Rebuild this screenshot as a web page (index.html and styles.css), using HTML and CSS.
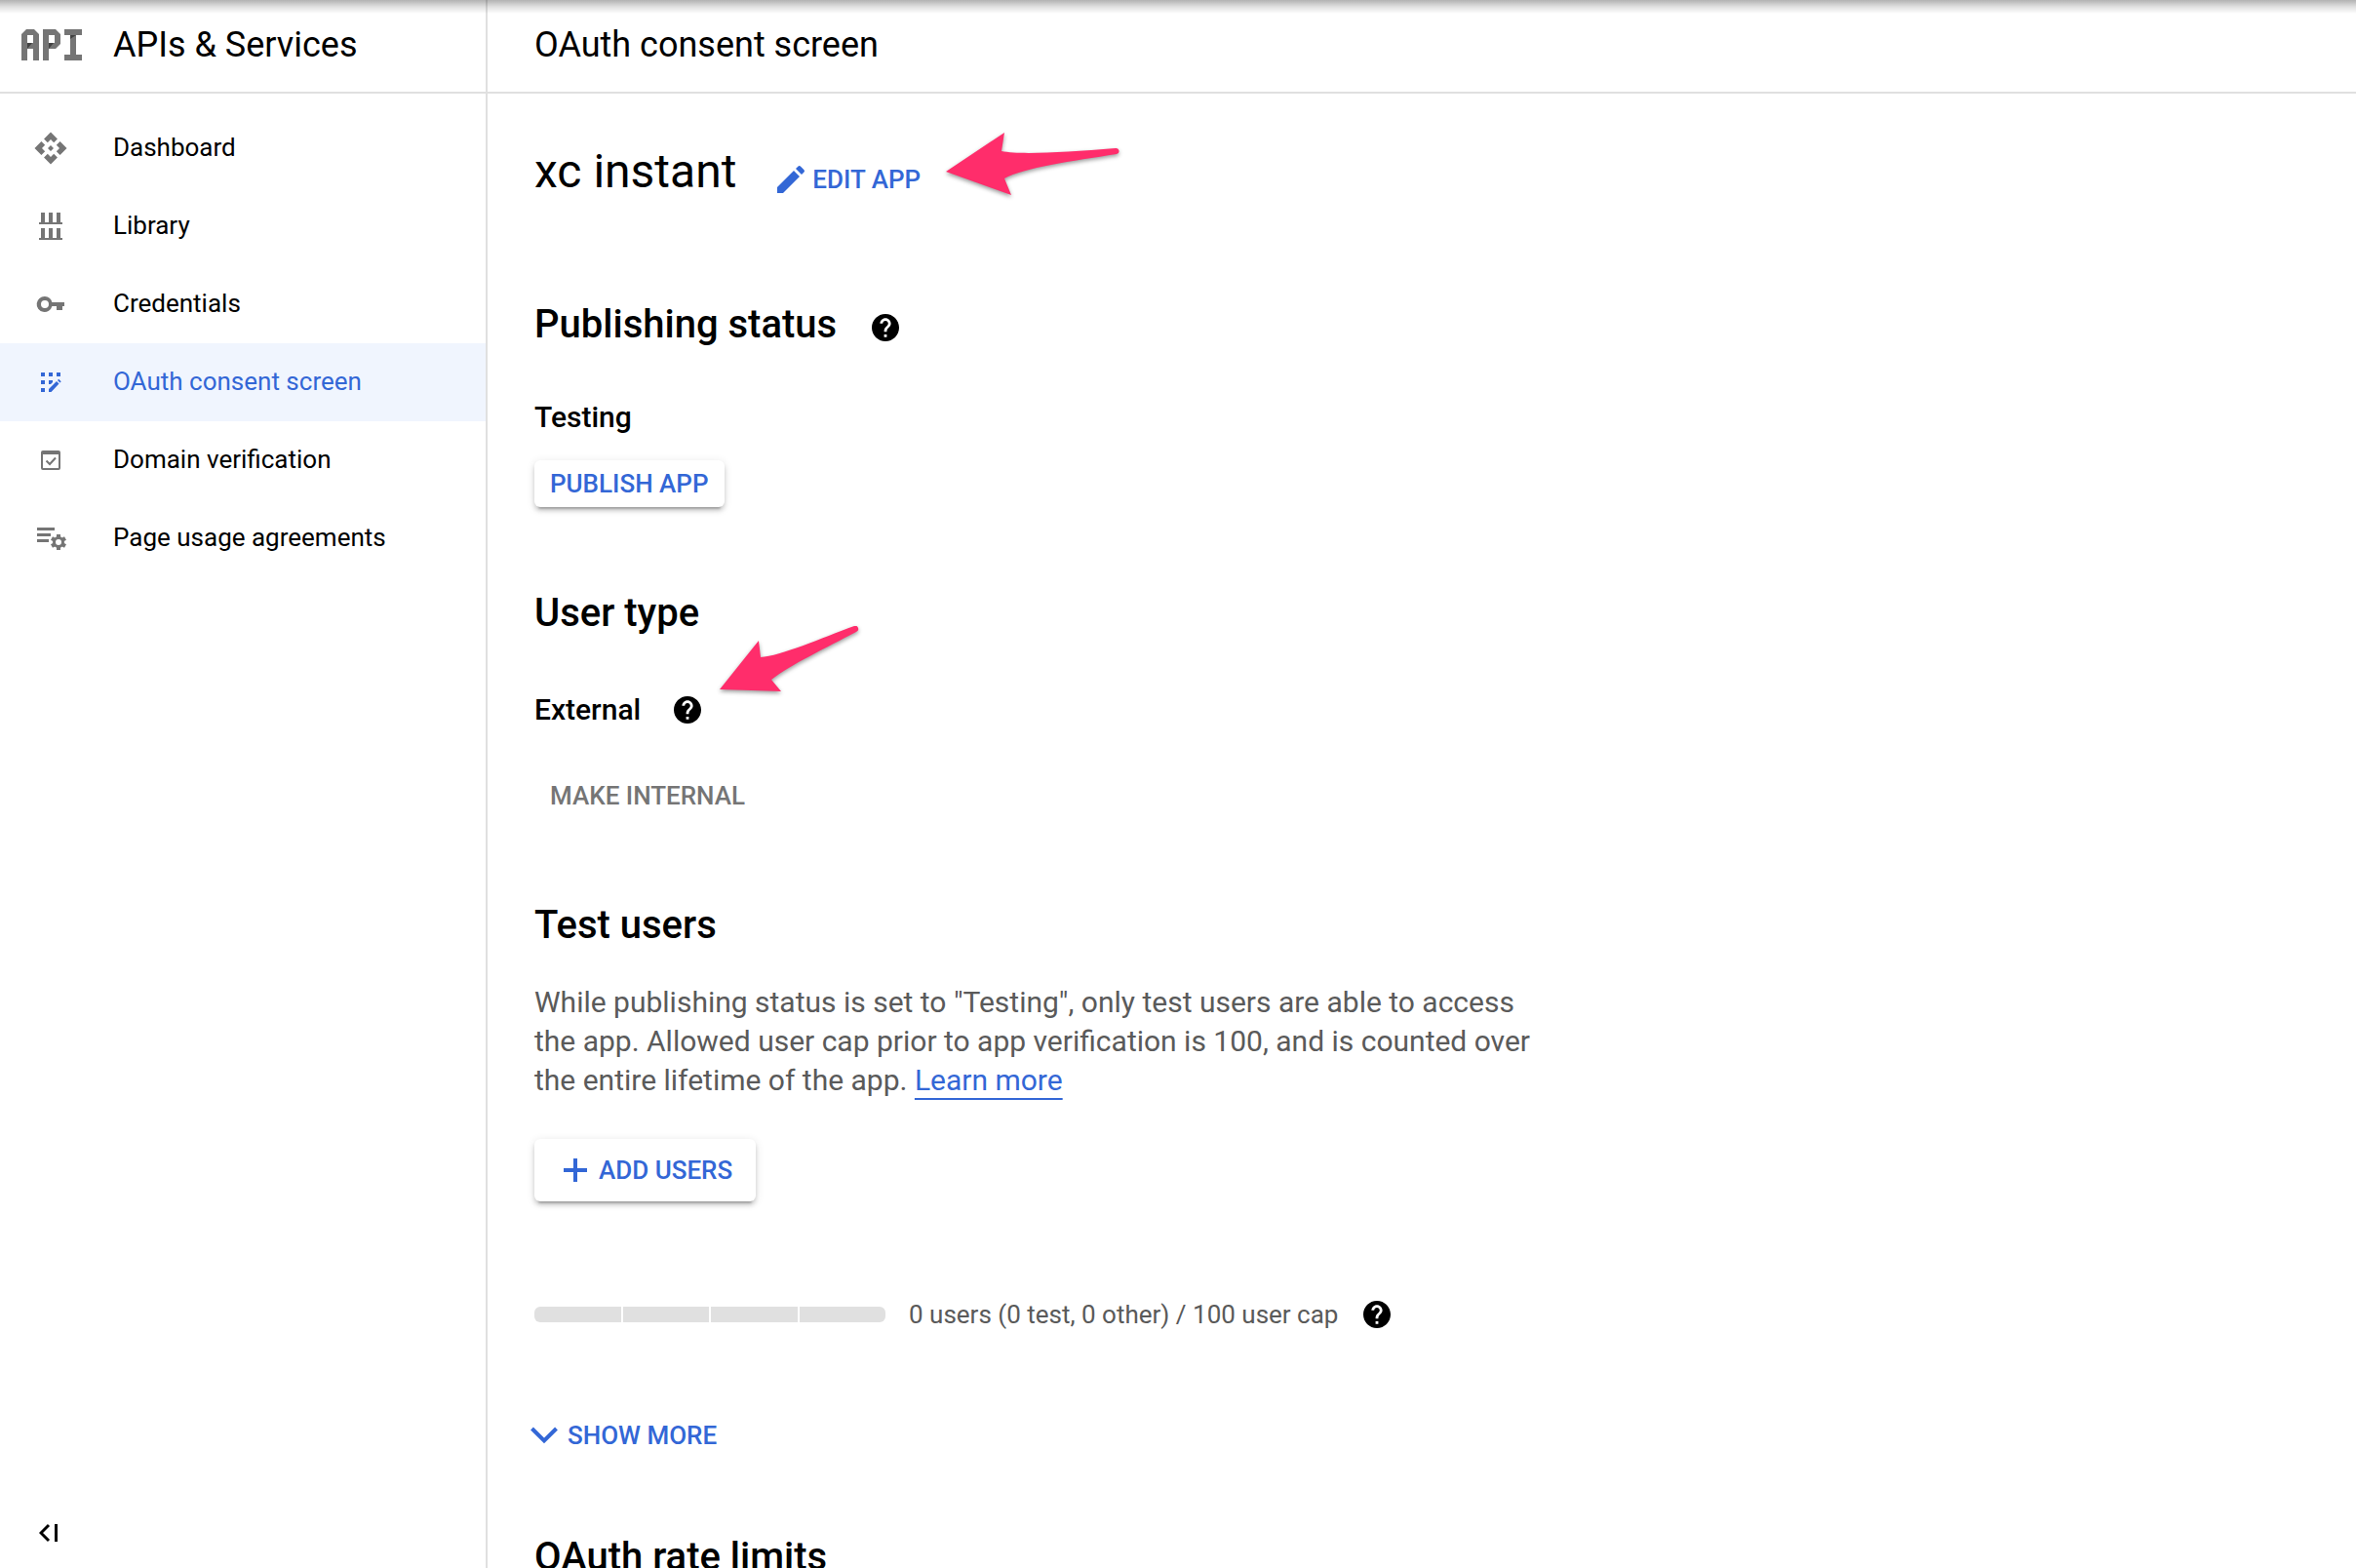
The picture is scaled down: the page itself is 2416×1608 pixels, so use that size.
FILE: index.html
```html
<!DOCTYPE html>
<html lang="en">
<head>
<meta charset="utf-8">
<meta name="viewport" content="width=device-width, initial-scale=1">
<title>OAuth consent screen – APIs &amp; Services</title>
<link rel="stylesheet" href="styles.css">
</head>
<body>
<svg class="sprite" aria-hidden="true">
  <symbol id="help" viewBox="2 2 20 20">
    <path d="M12 2C6.480 2 2 6.480 2 12s4.480 10 10 10 10-4.480 10-10S17.520 2 12 2zm1 17h-2v-2h2v2zm2.070-7.750l-.9.920C13.450 12.900 13 13.500 13 15h-2v-.5c0-1.100.450-2.100 1.170-2.830l1.240-1.260c.370-.360.590-.860.590-1.410 0-1.100-.9-2-2-2s-2 .9-2 2H8c0-2.210 1.790-4 4-4s4 1.790 4 4c0 .880-.360 1.680-.930 2.250z"/>
  </symbol>
</svg>
<div class="app">
  <aside class="sidebar">
    <div class="bar product">
      <svg class="logo" viewBox="0 0 62 32" aria-hidden="true">
        <path fill="#757575" fill-rule="evenodd" d="M0 32V5l5-5h8l5 5v27h-6v-12H6v12zM6 6v8h6V6zM22 32V0h13l5 5v10l-5 5h-7v12zM28 6v8h6V6zM44 0h18v6h-6v20h6v6H44v-6h6V6h-6z"/>
        <path fill="#424242" d="M6 20v-6h5zM28 20v-6h5zM50 10V6h6z"/>
      </svg>
      <span class="bar-title">APIs &amp; Services</span>
    </div>
    <nav class="nav" aria-label="APIs and services">
      <a class="nav-item" href="#dashboard">
        <svg class="nav-icon" viewBox="0 0 24 24" aria-hidden="true"><path d="M14 12l-2 2-2-2 2-2 2 2zm-2-6l2.120 2.120 2.500-2.500L12 1 7.380 5.620l2.500 2.500L12 6zm-6 6l2.120-2.120-2.500-2.500L1 12l4.620 4.620 2.500-2.500L6 12zm12 0l-2.120 2.120 2.500 2.500L23 12l-4.620-4.620-2.500 2.500L18 12zm-6 6l-2.120-2.120-2.500 2.500L12 23l4.620-4.620-2.500-2.500L12 18z"/></svg>
        <span>Dashboard</span>
      </a>
      <a class="nav-item" href="#library">
        <svg class="nav-icon" viewBox="0 0 36 36" aria-hidden="true"><path d="M8 4h4v10h4V4h4v10h4V4h4v10h2v2H6v-2h2zM8 20h4v10h4V20h4v10h4V20h4v10h2v2H6v-2h2z"/></svg>
        <span>Library</span>
      </a>
      <a class="nav-item" href="#credentials">
        <svg class="nav-icon" viewBox="0 0 36 36" aria-hidden="true"><path fill-rule="evenodd" d="M12 10a8 8 0 0 1 7.400 6H32v4h-2v4h-6v-4h-4.600A8 8 0 1 1 12 10zm0 4a4 4 0 1 0 0 8 4 4 0 0 0 0-8z"/></svg>
        <span>Credentials</span>
      </a>
      <a class="nav-item active" href="#consent" aria-current="page">
        <svg class="nav-icon" viewBox="0 0 36 36" aria-hidden="true"><path d="M8 8h4v4H8zM16 8h4v4h-4zM24 8h4v4h-4zM8 16h4v4H8zM16 16h4v2l-2 2h-2zM8 24h4v4H8zM16 28v-3l8-8 2.500 2.500L18.500 28zM25 16l1.200-1.200 2.500 2.500-1.200 1.200z"/></svg>
        <span>OAuth consent screen</span>
      </a>
      <a class="nav-item" href="#domains">
        <svg class="nav-icon" viewBox="0 0 36 36" aria-hidden="true"><path fill-rule="evenodd" d="M10 8h16a2 2 0 0 1 2 2v16a2 2 0 0 1-2 2H10a2 2 0 0 1-2-2V10a2 2 0 0 1 2-2zm0 4v14h16V12z"/><path fill="none" stroke="currentColor" stroke-width="2" d="M13.500 18.500l3.500 3.500 6-6.500"/></svg>
        <span>Domain verification</span>
      </a>
      <a class="nav-item" href="#agreements">
        <svg class="nav-icon" viewBox="0 0 36 36" aria-hidden="true"><path d="M4 7h18v3H4zM4 13h14v3H4zM4 19h12v3H4z"/><circle cx="26" cy="22" r="4.500" fill="none" stroke="currentColor" stroke-width="3"/><path fill="none" stroke="currentColor" stroke-width="4" d="M26 14v3M26 27v3M19 18l2.600 1.500M30.400 24.500L33 26M19 26l2.600-1.500M30.400 19.500L33 18"/></svg>
        <span>Page usage agreements</span>
      </a>
    </nav>
    <button class="collapse" type="button" aria-label="Collapse navigation">
      <svg viewBox="0 0 20 20" aria-hidden="true"><path fill="none" stroke="currentColor" stroke-width="3" d="M10 2l-8 8 8 8M17.500 1v18"/></svg>
    </button>
  </aside>

  <main class="main">
    <header class="bar"><h1 class="bar-title">OAuth consent screen</h1></header>
    <div class="content">
      <div class="app-row">
        <h2 class="app-name">xc instant</h2>
        <button class="btn edit" type="button">
          <svg class="pencil" viewBox="0 0 28 28" aria-hidden="true"><path d="M0 28v-6L17 5l6 6L6 28zM19 3l2.300-2.300a2 2 0 0 1 2.800 0l3.200 3.200a2 2 0 0 1 0 2.800L25 9z"/></svg>
          EDIT APP
        </button>
      </div>

      <section class="publishing">
        <h2 class="section-title">Publishing status <svg class="help" role="img" aria-label="Help"><use href="#help"/></svg></h2>
        <h3 class="value">Testing</h3>
        <button class="btn raised" type="button">PUBLISH APP</button>
      </section>

      <section class="user-type">
        <h2 class="section-title">User type</h2>
        <h3 class="value">External <svg class="help" role="img" aria-label="Help"><use href="#help"/></svg></h3>
        <button class="btn" type="button" disabled>MAKE INTERNAL</button>
      </section>

      <section class="test-users">
        <h2 class="section-title">Test users</h2>
        <p class="note">While publishing status is set to "Testing", only test users are able to access the app. Allowed user cap prior to app verification is 100, and is counted over the entire lifetime of the app. <a href="#learn">Learn more</a></p>
        <button class="btn raised add" type="button">
          <svg class="plus" viewBox="0 0 24 24" aria-hidden="true"><path d="M10 0h4v10h10v4H14v10h-4V14H0v-4h10z"/></svg>
          ADD USERS
        </button>
        <div class="usage">
          <div class="meter" role="img" aria-label="0 of 100 users"><i></i><i></i><i></i><i></i></div>
          <span class="usage-text">0 users (0 test, 0 other) / 100 user cap</span>
          <svg class="help" role="img" aria-label="Help"><use href="#help"/></svg>
        </div>
        <button class="btn more" type="button">
          <svg class="chevron" viewBox="0 0 28 18" aria-hidden="true"><path fill="none" stroke="currentColor" stroke-width="4" d="M1.500 2L14 14.500 26.500 2"/></svg>
          SHOW MORE
        </button>
      </section>

      <section class="rate-limits">
        <h2 class="section-title">OAuth rate limits</h2>
      </section>
    </div>
  </main>

  <svg class="arrow arrow-edit" viewBox="0 0 180 70" aria-hidden="true"><path d="M0 40L60 0l-3 19c20 4 66 1 117-3a3 3 0 0 1 1 6C130 29 80 36 60 47l7 17z"/></svg>
  <svg class="arrow arrow-type" viewBox="0 0 146 74" aria-hidden="true"><path d="M0 65L40 15l2 17C62 31 105 12 138 0a3 3 0 0 1 2 6C110 22 72 40 53 55l10 12z"/></svg>
</div>
</body>
</html>
```
FILE: styles.css
```css
* {
  box-sizing: border-box;
}

body {
  margin: 0;
  overflow: hidden;
  background: #fff;
  color: #000;
  font: 26px/40px Roboto, "Liberation Sans", sans-serif;
}

h1, h2, h3, p {
  margin: 0;
}

.sprite {
  display: none;
}

.app {
  position: relative;
  display: flex;
  height: 100vh;
}

/* shadow cast by the global toolbar above */
.app::before {
  content: "";
  position: absolute;
  inset: 0 0 auto;
  height: 14px;
  background: linear-gradient(rgba(0, 0, 0, .3), rgba(0, 0, 0, .12) 50%, rgba(0, 0, 0, 0));
}

.sidebar {
  flex: none;
  display: flex;
  flex-direction: column;
  width: 500px;
  border-right: 2px solid #e0e0e0;
}

.bar {
  display: flex;
  align-items: center;
  height: 96px;
  padding: 0 48px 2px;
  border-bottom: 2px solid #e0e0e0;
}

.bar-title {
  font-size: 36px;
  font-weight: 400;
}

.product {
  gap: 32px;
  padding-left: 22px;
}

.logo {
  width: 62px;
  height: 32px;
}

.nav {
  padding: 16px 0;
}

.nav-item {
  display: flex;
  align-items: center;
  gap: 46px;
  height: 80px;
  padding-left: 34px;
  color: #000;
  text-decoration: none;
}

.nav-icon {
  width: 36px;
  height: 36px;
  color: #757575;
  fill: currentColor;
}

.nav-item span {
  padding-bottom: 2px;
}

.active {
  background: #f0f5fe;
}

.active, .active .nav-icon {
  color: #3367d6;
}

.collapse {
  width: 40px;
  height: 40px;
  margin: auto 0 16px 30px;
  padding: 10px;
  border: 0;
  background: none;
  color: #000;
}

.collapse svg {
  display: block;
}

.main {
  flex: 1;
  min-width: 0;
}

.content {
  padding: 52px 48px;
}

.app-row {
  display: flex;
  align-items: flex-end;
  gap: 42px;
  height: 56px;
}

.app-name {
  font-size: 48px;
  line-height: 56px;
  font-weight: 400;
}

.btn {
  display: inline-flex;
  align-items: center;
  height: 48px;
  padding: 0 16px;
  border: 0;
  border-radius: 6px;
  background: none;
  color: #3367d6;
  font: 500 26px/40px Roboto, "Liberation Sans", sans-serif;
}

.btn svg {
  fill: currentColor;
}

.btn:disabled {
  color: #757575;
}

.raised {
  background: #fff;
  box-shadow: 0 6px 2px -4px rgba(0, 0, 0, .2), 0 4px 4px rgba(0, 0, 0, .14), 0 2px 10px rgba(0, 0, 0, .12);
}

.edit {
  gap: 8px;
  height: 40px;
  padding: 0;
}

.pencil {
  width: 28px;
  height: 28px;
}

section {
  display: flex;
  flex-direction: column;
  align-items: flex-start;
  margin-top: 84px;
}

.publishing {
  margin-top: 104px;
}

.section-title {
  display: flex;
  align-items: center;
  gap: 36px;
  font-size: 40px;
  line-height: 50px;
  font-weight: 500;
}

.section-title .help {
  margin-top: 6px;
}

.value {
  display: flex;
  align-items: center;
  gap: 34px;
  margin: 50px 0 24px;
  font-size: 30px;
  font-weight: 500;
}

.user-type .value {
  margin: 54px 0 44px;
}

.help {
  width: 28px;
  height: 28px;
}

.note {
  max-width: 1040px;
  margin: 34px 0 40px;
  color: #5a5a5a;
  font-size: 30px;
}

.note a {
  color: #3367d6;
  text-decoration: underline 2px;
  text-decoration-skip-ink: none;
  text-underline-offset: 8px;
}

.add {
  gap: 12px;
  height: 64px;
  padding: 0 24px 0 30px;
}

.plus {
  width: 24px;
  height: 24px;
}

.usage {
  display: flex;
  align-items: center;
  gap: 24px;
  margin: 96px 0 80px;
}

.usage-text {
  padding-right: 2px;
  color: #5a5a5a;
}

.meter {
  display: flex;
  gap: 2px;
  width: 360px;
  height: 16px;
  overflow: hidden;
  border-radius: 6px;
}

.meter i {
  flex: 1;
  background: #e0e0e0;
}

.more {
  gap: 10px;
  margin-left: -4px;
  padding: 0;
}

.chevron {
  width: 28px;
  height: 18px;
}

.rate-limits {
  margin-top: 76px;
}

/* callouts drawn over the page */
.arrow {
  position: absolute;
  fill: #ff2d6b;
  filter: drop-shadow(0 2px 2px rgba(0, 0, 0, .4));
}

.arrow-edit {
  top: 136px;
  left: 970px;
  width: 180px;
  height: 70px;
}

.arrow-type {
  top: 642px;
  left: 738px;
  width: 146px;
  height: 74px;
}
```
